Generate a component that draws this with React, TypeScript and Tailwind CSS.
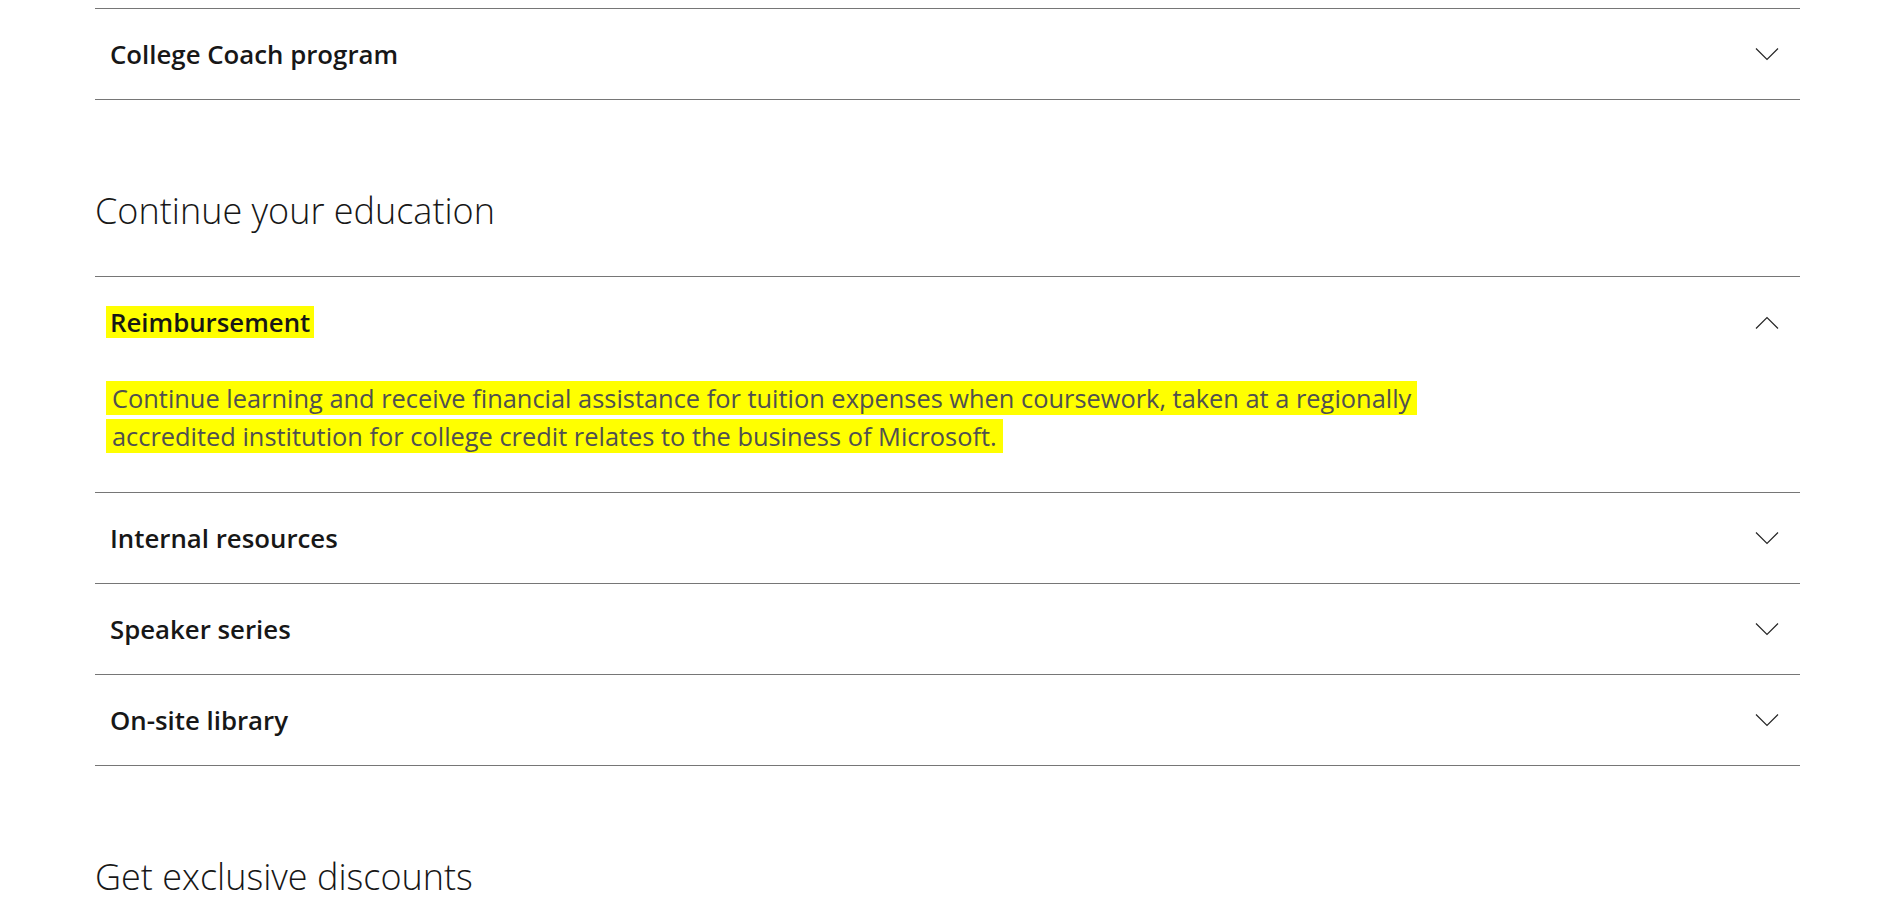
const FONT = "font-['Open_Sans','Noto_Sans',sans-serif]";

function Chevron({ up = false }: { up?: boolean }) {
  return (
    <svg
      aria-hidden
      width="24"
      height="13"
      viewBox="0 0 24 13"
      fill="none"
      className="shrink-0"
    >
      <path
        d={up ? "M1 12.5 L12 1.5 L23 12.5" : "M1 0.5 L12 11.5 L23 0.5"}
        stroke="#262626"
        strokeWidth="1.2"
      />
    </svg>
  );
}

function Row({ title }: { title: string }) {
  return (
    <div className="border-b border-[#767676]">
      <button className="flex h-[90px] w-full items-center justify-between pl-[15px] pr-[21px] text-left">
        <span className="text-[25.8px] font-semibold text-[#171717]">{title}</span>
        <Chevron />
      </button>
    </div>
  );
}

function Heading({ children }: { children: string }) {
  return (
    <h2 className="mb-[41px] mt-[87px] text-[36px] font-light leading-[48px] text-[#171717]">
      {children}
    </h2>
  );
}

export default function App() {
  return (
    <div className={`${FONT} min-h-screen bg-white px-[95px] pt-2`}>
      <div className="border-t border-[#767676]">
        <Row title="College Coach program" />
      </div>

      <Heading>Continue your education</Heading>

      <div className="border-t border-[#767676]">
        <div className="border-b border-[#767676]">
          <button className="flex h-[90px] w-full items-center justify-between pl-[11px] pr-[21px] text-left">
            <span className="bg-[#ffff00] px-1 text-[25.8px] font-semibold leading-[32px] text-[#171717]">
              Reimbursement
            </span>
            <Chevron up />
          </button>
          <p className="pb-[37px] pl-[11px] pt-3 text-[25.4px] leading-[38px] text-[#505050]">
            <span className="bg-[#ffff00] box-decoration-clone px-[6px]">
              Continue learning and receive financial assistance for tuition expenses when
              coursework, taken at a regionally
              <br />
              accredited institution for college credit relates to the business of Microsoft.
            </span>
          </p>
        </div>
        <Row title="Internal resources" />
        <Row title="Speaker series" />
        <Row title="On-site library" />
      </div>

      <Heading>Get exclusive discounts</Heading>
    </div>
  );
}
